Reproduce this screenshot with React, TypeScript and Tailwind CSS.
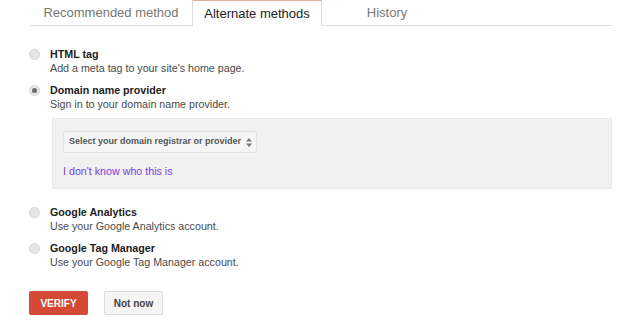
const font = { fontFamily: '"Liberation Sans", Arial, sans-serif' };

interface OptionProps {
  title: string;
  desc: string;
  checked?: boolean;
}

function Radio({ checked }: { checked?: boolean }) {
  return (
    <div className="mt-[1.5px] flex h-[11px] w-[11px] shrink-0 items-center justify-center rounded-full border border-[#d6d6d6] bg-[#e6e6e6]">
      {checked && <div className="h-[5px] w-[5px] rounded-full bg-[#6b6b6b]" />}
    </div>
  );
}

function Option({ title, desc, checked }: OptionProps) {
  return (
    <div className="flex items-start gap-[10px] pl-[29px]">
      <Radio checked={checked} />
      <div>
        <div className="text-[10.7px] font-bold leading-[14px] text-[#222]">{title}</div>
        <div className="text-[10.7px] leading-[14px] text-[#4a4a4a]">{desc}</div>
      </div>
    </div>
  );
}

export default function App() {
  return (
    <div className="h-[332px] w-[633px] bg-white" style={font}>
      <div className="ml-[30px] flex h-[26px] w-[582px] border-b border-[#dcdcdc]">
        <div className="flex w-[162px] items-center justify-center text-[13px] text-[#777]">
          Recommended method
        </div>
        <div className="-mb-px flex w-[130px] items-center justify-center border-x border-t border-[#dcdcdc] border-t-[#e9a898] bg-white text-[13px] text-[#222]">
          Alternate methods
        </div>
        <div className="flex w-[130px] items-center justify-center text-[13px] text-[#777]">
          History
        </div>
      </div>

      <div className="mt-[21px] flex flex-col gap-[8px]">
        <Option title="HTML tag" desc="Add a meta tag to your site's home page." />
        <Option title="Domain name provider" desc="Sign in to your domain name provider." checked />
      </div>

      <div className="ml-[52px] mt-[7px] h-[71px] w-[560px] border border-[#e8e8e8] bg-[#f1f1f1] px-[10px] pt-[12px]">
        <div className="flex h-[22px] w-[194px] items-center justify-between rounded-[2px] border border-[#e2e2e2] bg-[#f5f5f5] pl-[5px] pr-[4px]">
          <span className="whitespace-nowrap text-[9px] font-bold text-[#555]">Select your domain registrar or provider</span>
          <svg width="6" height="9" viewBox="0 0 6 9">
            <path d="M3 0 L6 3.5 H0 Z" fill="#777" />
            <path d="M3 9 L6 5.5 H0 Z" fill="#777" />
          </svg>
        </div>
        <div className="mt-[11px] text-[10.7px] leading-[14px] text-[#7a3fe0]">I don't know who this is</div>
      </div>

      <div className="mt-[16px] flex flex-col gap-[8px]">
        <Option title="Google Analytics" desc="Use your Google Analytics account." />
        <Option title="Google Tag Manager" desc="Use your Google Tag Manager account." />
      </div>

      <div className="ml-[29px] mt-[22px] flex gap-[16px]">
        <button className="h-[24px] w-[59px] rounded-[2px] bg-[#d44a37] text-[10px] font-bold text-white">
          VERIFY
        </button>
        <button className="h-[24px] w-[59px] rounded-[2px] border border-[#dcdcdc] bg-[#f5f5f5] text-[10px] font-bold text-[#444]">
          Not now
        </button>
      </div>
    </div>
  );
}
